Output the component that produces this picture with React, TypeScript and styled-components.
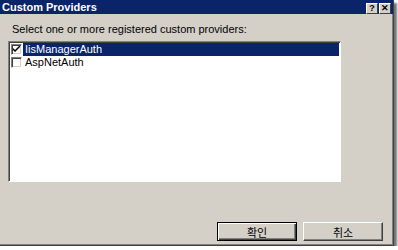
import styled, { createGlobalStyle } from 'styled-components';

const GlobalStyle = createGlobalStyle`
  html, body {
    margin: 0;
    padding: 0;
    background: #fff;
  }
  body {
    font-family: "Liberation Sans", "Noto Sans CJK KR", Arial, sans-serif;
    font-size: 11px;
  }
`;

const Window = styled.div`
  width: 394px;
  height: 246px;
  box-sizing: border-box;
  display: flex;
  flex-direction: column;
  background: #d4d0c8;
  border-right: 1px solid #404040;
  border-bottom: 1px solid #404040;
  box-shadow: inset -1px -1px 0 #808080, 3px 3px 2px rgba(0, 0, 0, 0.55);
`;

const TitleBar = styled.div`
  height: 14px;
  flex: none;
  display: flex;
  align-items: center;
  justify-content: space-between;
  padding: 0 2px 0 2px;
  background: #0a246a;
  color: #fff;
  font-weight: bold;
  font-size: 11px;
`;

const TitleButtons = styled.div`
  display: flex;
  gap: 1px;
  margin-top: 2px;
`;

const CaptionButton = styled.div`
  width: 12px;
  height: 11px;
  box-sizing: border-box;
  display: flex;
  align-items: center;
  justify-content: center;
  background: #d4d0c8;
  color: #000;
  font-size: 9px;
  font-weight: bold;
  line-height: 1;
  border-top: 1px solid #fff;
  border-left: 1px solid #fff;
  border-right: 1px solid #404040;
  border-bottom: 1px solid #404040;
`;

const Body = styled.div`
  flex: 1;
  display: flex;
  flex-direction: column;
  padding: 9px 10px 4px 8px;
`;

const Prompt = styled.div`
  line-height: 13px;
  padding-left: 4px;
  color: #000;
`;

const ListBox = styled.div`
  margin-top: 5px;
  width: 333px;
  height: 141px;
  box-sizing: border-box;
  background: #fff;
  padding: 1px;
  border-top: 1px solid #808080;
  border-left: 1px solid #808080;
  border-right: 1px solid #fff;
  border-bottom: 1px solid #fff;
  box-shadow: inset 1px 1px 0 #404040;
`;

const Row = styled.div`
  height: 13px;
  display: flex;
  align-items: center;
`;

const Check = styled.div`
  width: 11px;
  height: 11px;
  margin-left: 1px;
  box-sizing: border-box;
  flex: none;
  background: #fff;
  border-top: 1px solid #808080;
  border-left: 1px solid #808080;
  border-right: 1px solid #fff;
  border-bottom: 1px solid #fff;
  box-shadow: inset 1px 1px 0 #404040, inset -1px -1px 0 #d4d0c8;
  display: flex;
  align-items: center;
  justify-content: center;
`;

const ItemText = styled.div<{ $selected?: boolean }>`
  flex: 1;
  height: 13px;
  line-height: 13px;
  margin-left: 1px;
  padding-left: 2px;
  background: ${(p) => (p.$selected ? '#0a246a' : 'transparent')};
  color: ${(p) => (p.$selected ? '#fff' : '#000')};
`;

const Footer = styled.div`
  margin-top: auto;
  display: flex;
  justify-content: flex-end;
  gap: 6px;
`;

const Button = styled.button<{ $default?: boolean }>`
  width: 80px;
  height: 19px;
  box-sizing: border-box;
  padding: 0;
  background: #d4d0c8;
  font-family: "Noto Sans CJK KR", "Liberation Sans", sans-serif;
  font-size: 11px;
  color: #000;
  border-top: 1px solid ${(p) => (p.$default ? '#000' : '#fff')};
  border-left: 1px solid ${(p) => (p.$default ? '#000' : '#fff')};
  border-right: 1px solid ${(p) => (p.$default ? '#000' : '#404040')};
  border-bottom: 1px solid ${(p) => (p.$default ? '#000' : '#404040')};
  box-shadow: ${(p) =>
    p.$default
      ? 'inset 1px 1px 0 #fff, inset -1px -1px 0 #404040, inset -2px -2px 0 #808080'
      : 'inset -1px -1px 0 #808080'};
`;

const CheckMark = () => (
  <svg width="7" height="7" viewBox="0 0 7 7">
    <path d="M0 2 L0 4 L2 6 L7 1 L7 -1 L2 4 Z" fill="#000" />
  </svg>
);

const providers = [
  { name: 'IisManagerAuth', checked: true, selected: true },
  { name: 'AspNetAuth', checked: false, selected: false },
];

export default function App() {
  return (
    <>
      <GlobalStyle />
      <Window>
        <TitleBar>
          <span>Custom Providers</span>
          <TitleButtons>
            <CaptionButton>?</CaptionButton>
            <CaptionButton>✕</CaptionButton>
          </TitleButtons>
        </TitleBar>
        <Body>
          <Prompt>Select one or more registered custom providers:</Prompt>
          <ListBox>
            {providers.map((p) => (
              <Row key={p.name}>
                <Check>{p.checked && <CheckMark />}</Check>
                <ItemText $selected={p.selected}>{p.name}</ItemText>
              </Row>
            ))}
          </ListBox>
          <Footer>
            <Button $default>확인</Button>
            <Button>취소</Button>
          </Footer>
        </Body>
      </Window>
    </>
  );
}
